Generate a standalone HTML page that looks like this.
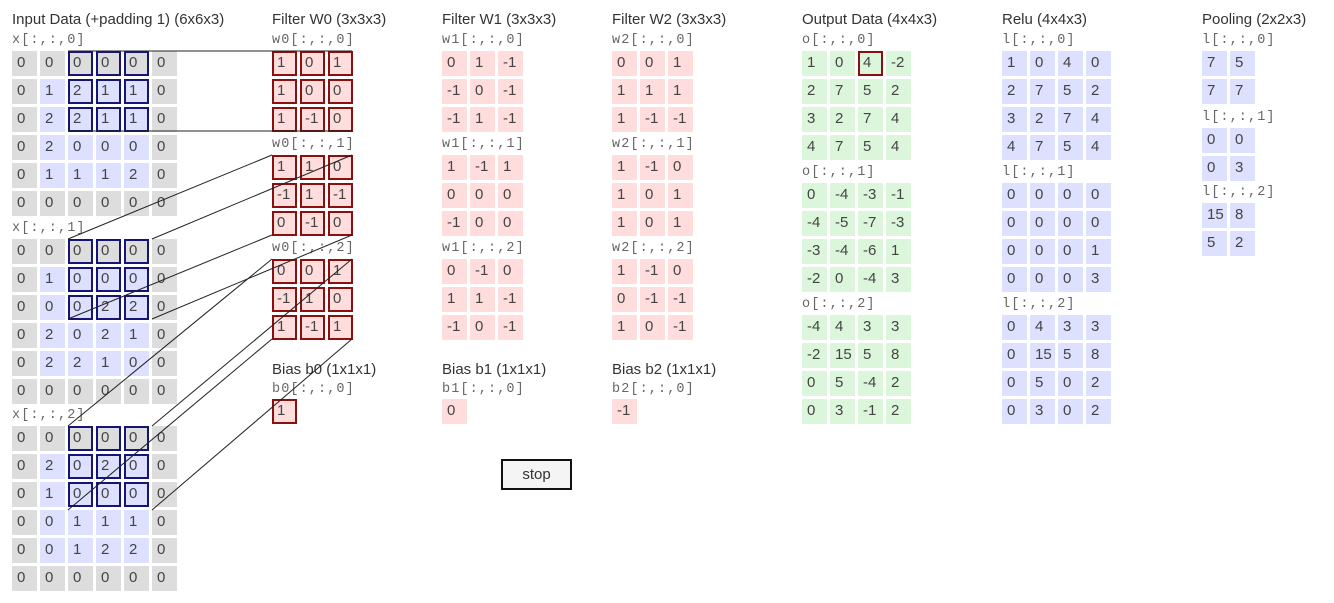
<!DOCTYPE html>
<html><head><meta charset="utf-8"><style>
body{margin:0;width:1334px;height:603px;background:#fff;position:relative;overflow:hidden;font-family:"Liberation Sans",sans-serif;}
.t{position:absolute;font-size:15px;color:#333;white-space:nowrap;}
.l{position:absolute;font-family:"Liberation Mono",monospace;font-size:13.5px;letter-spacing:1.1px;color:#666;white-space:nowrap;}
.g{position:absolute;}
.r{display:flex;gap:3px;margin-bottom:3px;height:25px;}
.c{width:25px;height:25px;box-sizing:border-box;padding-left:5px;font-size:15px;line-height:23px;color:#444;}
.p{background:#ddd}.v{background:#dde0ff}.k{background:#fdd}.n{background:#dcf6dc}
.hb{border:2px solid #14147a;padding-left:3px;line-height:19px}
.hr{border:2px solid #8a1010;padding-left:3px;line-height:19px}
button{position:absolute;left:501px;top:459px;width:71px;height:31px;background:#f4f4f4;border:2px solid #111;font-family:"Liberation Sans",sans-serif;font-size:15px;color:#333;padding:0;}
svg{position:absolute;left:0;top:0;}
</style></head><body>
<div class="t" style="left:12px;top:11px">Input Data (+padding 1) (6x6x3)</div>
<div class="t" style="left:272px;top:11px">Filter W0 (3x3x3)</div>
<div class="t" style="left:442px;top:11px">Filter W1 (3x3x3)</div>
<div class="t" style="left:612px;top:11px">Filter W2 (3x3x3)</div>
<div class="t" style="left:802px;top:11px">Output Data (4x4x3)</div>
<div class="t" style="left:1002px;top:11px">Relu (4x4x3)</div>
<div class="t" style="left:1202px;top:11px">Pooling (2x2x3)</div>

<div class="l" style="left:12px;top:33px">x[:,:,0]</div>
<div class="g" style="left:12px;top:51px">
<div class="r"><div class="c p">0</div><div class="c p">0</div><div class="c p hb">0</div><div class="c p hb">0</div><div class="c p hb">0</div><div class="c p">0</div></div>
<div class="r"><div class="c p">0</div><div class="c v">1</div><div class="c v hb">2</div><div class="c v hb">1</div><div class="c v hb">1</div><div class="c p">0</div></div>
<div class="r"><div class="c p">0</div><div class="c v">2</div><div class="c v hb">2</div><div class="c v hb">1</div><div class="c v hb">1</div><div class="c p">0</div></div>
<div class="r"><div class="c p">0</div><div class="c v">2</div><div class="c v">0</div><div class="c v">0</div><div class="c v">0</div><div class="c p">0</div></div>
<div class="r"><div class="c p">0</div><div class="c v">1</div><div class="c v">1</div><div class="c v">1</div><div class="c v">2</div><div class="c p">0</div></div>
<div class="r"><div class="c p">0</div><div class="c p">0</div><div class="c p">0</div><div class="c p">0</div><div class="c p">0</div><div class="c p">0</div></div>
</div>
<div class="l" style="left:12px;top:221px">x[:,:,1]</div>
<div class="g" style="left:12px;top:239px">
<div class="r"><div class="c p">0</div><div class="c p">0</div><div class="c p hb">0</div><div class="c p hb">0</div><div class="c p hb">0</div><div class="c p">0</div></div>
<div class="r"><div class="c p">0</div><div class="c v">1</div><div class="c v hb">0</div><div class="c v hb">0</div><div class="c v hb">0</div><div class="c p">0</div></div>
<div class="r"><div class="c p">0</div><div class="c v">0</div><div class="c v hb">0</div><div class="c v hb">2</div><div class="c v hb">2</div><div class="c p">0</div></div>
<div class="r"><div class="c p">0</div><div class="c v">2</div><div class="c v">0</div><div class="c v">2</div><div class="c v">1</div><div class="c p">0</div></div>
<div class="r"><div class="c p">0</div><div class="c v">2</div><div class="c v">2</div><div class="c v">1</div><div class="c v">0</div><div class="c p">0</div></div>
<div class="r"><div class="c p">0</div><div class="c p">0</div><div class="c p">0</div><div class="c p">0</div><div class="c p">0</div><div class="c p">0</div></div>
</div>
<div class="l" style="left:12px;top:408px">x[:,:,2]</div>
<div class="g" style="left:12px;top:426px">
<div class="r"><div class="c p">0</div><div class="c p">0</div><div class="c p hb">0</div><div class="c p hb">0</div><div class="c p hb">0</div><div class="c p">0</div></div>
<div class="r"><div class="c p">0</div><div class="c v">2</div><div class="c v hb">0</div><div class="c v hb">2</div><div class="c v hb">0</div><div class="c p">0</div></div>
<div class="r"><div class="c p">0</div><div class="c v">1</div><div class="c v hb">0</div><div class="c v hb">0</div><div class="c v hb">0</div><div class="c p">0</div></div>
<div class="r"><div class="c p">0</div><div class="c v">0</div><div class="c v">1</div><div class="c v">1</div><div class="c v">1</div><div class="c p">0</div></div>
<div class="r"><div class="c p">0</div><div class="c v">0</div><div class="c v">1</div><div class="c v">2</div><div class="c v">2</div><div class="c p">0</div></div>
<div class="r"><div class="c p">0</div><div class="c p">0</div><div class="c p">0</div><div class="c p">0</div><div class="c p">0</div><div class="c p">0</div></div>
</div>

<div class="l" style="left:272px;top:33px">w0[:,:,0]</div>
<div class="g" style="left:272px;top:51px">
<div class="r"><div class="c k hr">1</div><div class="c k hr">0</div><div class="c k hr">1</div></div>
<div class="r"><div class="c k hr">1</div><div class="c k hr">0</div><div class="c k hr">0</div></div>
<div class="r"><div class="c k hr">1</div><div class="c k hr">-1</div><div class="c k hr">0</div></div></div>
<div class="l" style="left:272px;top:137px">w0[:,:,1]</div>
<div class="g" style="left:272px;top:155px">
<div class="r"><div class="c k hr">1</div><div class="c k hr">1</div><div class="c k hr">0</div></div>
<div class="r"><div class="c k hr">-1</div><div class="c k hr">1</div><div class="c k hr">-1</div></div>
<div class="r"><div class="c k hr">0</div><div class="c k hr">-1</div><div class="c k hr">0</div></div></div>
<div class="l" style="left:272px;top:241px">w0[:,:,2]</div>
<div class="g" style="left:272px;top:259px">
<div class="r"><div class="c k hr">0</div><div class="c k hr">0</div><div class="c k hr">1</div></div>
<div class="r"><div class="c k hr">-1</div><div class="c k hr">1</div><div class="c k hr">0</div></div>
<div class="r"><div class="c k hr">1</div><div class="c k hr">-1</div><div class="c k hr">1</div></div></div>
<div class="t" style="left:272px;top:361px">Bias b0 (1x1x1)</div>
<div class="l" style="left:272px;top:382px">b0[:,:,0]</div>
<div class="g" style="left:272px;top:399px"><div class="r"><div class="c k hr">1</div></div></div>

<div class="l" style="left:442px;top:33px">w1[:,:,0]</div>
<div class="g" style="left:442px;top:51px">
<div class="r"><div class="c k">0</div><div class="c k">1</div><div class="c k">-1</div></div>
<div class="r"><div class="c k">-1</div><div class="c k">0</div><div class="c k">-1</div></div>
<div class="r"><div class="c k">-1</div><div class="c k">1</div><div class="c k">-1</div></div></div>
<div class="l" style="left:442px;top:137px">w1[:,:,1]</div>
<div class="g" style="left:442px;top:155px">
<div class="r"><div class="c k">1</div><div class="c k">-1</div><div class="c k">1</div></div>
<div class="r"><div class="c k">0</div><div class="c k">0</div><div class="c k">0</div></div>
<div class="r"><div class="c k">-1</div><div class="c k">0</div><div class="c k">0</div></div></div>
<div class="l" style="left:442px;top:241px">w1[:,:,2]</div>
<div class="g" style="left:442px;top:259px">
<div class="r"><div class="c k">0</div><div class="c k">-1</div><div class="c k">0</div></div>
<div class="r"><div class="c k">1</div><div class="c k">1</div><div class="c k">-1</div></div>
<div class="r"><div class="c k">-1</div><div class="c k">0</div><div class="c k">-1</div></div></div>
<div class="t" style="left:442px;top:361px">Bias b1 (1x1x1)</div>
<div class="l" style="left:442px;top:382px">b1[:,:,0]</div>
<div class="g" style="left:442px;top:399px"><div class="r"><div class="c k">0</div></div></div>

<div class="l" style="left:612px;top:33px">w2[:,:,0]</div>
<div class="g" style="left:612px;top:51px">
<div class="r"><div class="c k">0</div><div class="c k">0</div><div class="c k">1</div></div>
<div class="r"><div class="c k">1</div><div class="c k">1</div><div class="c k">1</div></div>
<div class="r"><div class="c k">1</div><div class="c k">-1</div><div class="c k">-1</div></div></div>
<div class="l" style="left:612px;top:137px">w2[:,:,1]</div>
<div class="g" style="left:612px;top:155px">
<div class="r"><div class="c k">1</div><div class="c k">-1</div><div class="c k">0</div></div>
<div class="r"><div class="c k">1</div><div class="c k">0</div><div class="c k">1</div></div>
<div class="r"><div class="c k">1</div><div class="c k">0</div><div class="c k">1</div></div></div>
<div class="l" style="left:612px;top:241px">w2[:,:,2]</div>
<div class="g" style="left:612px;top:259px">
<div class="r"><div class="c k">1</div><div class="c k">-1</div><div class="c k">0</div></div>
<div class="r"><div class="c k">0</div><div class="c k">-1</div><div class="c k">-1</div></div>
<div class="r"><div class="c k">1</div><div class="c k">0</div><div class="c k">-1</div></div></div>
<div class="t" style="left:612px;top:361px">Bias b2 (1x1x1)</div>
<div class="l" style="left:612px;top:382px">b2[:,:,0]</div>
<div class="g" style="left:612px;top:399px"><div class="r"><div class="c k">-1</div></div></div>

<div class="l" style="left:802px;top:33px">o[:,:,0]</div>
<div class="g" style="left:802px;top:51px">
<div class="r"><div class="c n">1</div><div class="c n">0</div><div class="c n hr">4</div><div class="c n">-2</div></div>
<div class="r"><div class="c n">2</div><div class="c n">7</div><div class="c n">5</div><div class="c n">2</div></div>
<div class="r"><div class="c n">3</div><div class="c n">2</div><div class="c n">7</div><div class="c n">4</div></div>
<div class="r"><div class="c n">4</div><div class="c n">7</div><div class="c n">5</div><div class="c n">4</div></div></div>
<div class="l" style="left:802px;top:165px">o[:,:,1]</div>
<div class="g" style="left:802px;top:183px">
<div class="r"><div class="c n">0</div><div class="c n">-4</div><div class="c n">-3</div><div class="c n">-1</div></div>
<div class="r"><div class="c n">-4</div><div class="c n">-5</div><div class="c n">-7</div><div class="c n">-3</div></div>
<div class="r"><div class="c n">-3</div><div class="c n">-4</div><div class="c n">-6</div><div class="c n">1</div></div>
<div class="r"><div class="c n">-2</div><div class="c n">0</div><div class="c n">-4</div><div class="c n">3</div></div></div>
<div class="l" style="left:802px;top:297px">o[:,:,2]</div>
<div class="g" style="left:802px;top:315px">
<div class="r"><div class="c n">-4</div><div class="c n">4</div><div class="c n">3</div><div class="c n">3</div></div>
<div class="r"><div class="c n">-2</div><div class="c n">15</div><div class="c n">5</div><div class="c n">8</div></div>
<div class="r"><div class="c n">0</div><div class="c n">5</div><div class="c n">-4</div><div class="c n">2</div></div>
<div class="r"><div class="c n">0</div><div class="c n">3</div><div class="c n">-1</div><div class="c n">2</div></div></div>

<div class="l" style="left:1002px;top:33px">l[:,:,0]</div>
<div class="g" style="left:1002px;top:51px">
<div class="r"><div class="c v">1</div><div class="c v">0</div><div class="c v">4</div><div class="c v">0</div></div>
<div class="r"><div class="c v">2</div><div class="c v">7</div><div class="c v">5</div><div class="c v">2</div></div>
<div class="r"><div class="c v">3</div><div class="c v">2</div><div class="c v">7</div><div class="c v">4</div></div>
<div class="r"><div class="c v">4</div><div class="c v">7</div><div class="c v">5</div><div class="c v">4</div></div></div>
<div class="l" style="left:1002px;top:165px">l[:,:,1]</div>
<div class="g" style="left:1002px;top:183px">
<div class="r"><div class="c v">0</div><div class="c v">0</div><div class="c v">0</div><div class="c v">0</div></div>
<div class="r"><div class="c v">0</div><div class="c v">0</div><div class="c v">0</div><div class="c v">0</div></div>
<div class="r"><div class="c v">0</div><div class="c v">0</div><div class="c v">0</div><div class="c v">1</div></div>
<div class="r"><div class="c v">0</div><div class="c v">0</div><div class="c v">0</div><div class="c v">3</div></div></div>
<div class="l" style="left:1002px;top:297px">l[:,:,2]</div>
<div class="g" style="left:1002px;top:315px">
<div class="r"><div class="c v">0</div><div class="c v">4</div><div class="c v">3</div><div class="c v">3</div></div>
<div class="r"><div class="c v">0</div><div class="c v">15</div><div class="c v">5</div><div class="c v">8</div></div>
<div class="r"><div class="c v">0</div><div class="c v">5</div><div class="c v">0</div><div class="c v">2</div></div>
<div class="r"><div class="c v">0</div><div class="c v">3</div><div class="c v">0</div><div class="c v">2</div></div></div>

<div class="l" style="left:1202px;top:33px">l[:,:,0]</div>
<div class="g" style="left:1202px;top:51px">
<div class="r"><div class="c v">7</div><div class="c v">5</div></div>
<div class="r"><div class="c v">7</div><div class="c v">7</div></div></div>
<div class="l" style="left:1202px;top:110px">l[:,:,1]</div>
<div class="g" style="left:1202px;top:128px">
<div class="r"><div class="c v">0</div><div class="c v">0</div></div>
<div class="r"><div class="c v">0</div><div class="c v">3</div></div></div>
<div class="l" style="left:1202px;top:185px">l[:,:,2]</div>
<div class="g" style="left:1202px;top:203px">
<div class="r"><div class="c v">15</div><div class="c v">8</div></div>
<div class="r"><div class="c v">5</div><div class="c v">2</div></div></div>

<button>stop</button>

<svg width="1334" height="603" viewBox="0 0 1334 603">
<g stroke="#222" stroke-width="1" fill="none">
<line x1="68" y1="51" x2="272" y2="51"/><line x1="152" y1="51" x2="352" y2="51"/>
<line x1="68" y1="131" x2="272" y2="131"/><line x1="152" y1="131" x2="352" y2="131"/>
<line x1="68" y1="239" x2="272" y2="155"/><line x1="152" y1="239" x2="352" y2="155"/>
<line x1="68" y1="319" x2="272" y2="235"/><line x1="152" y1="319" x2="352" y2="235"/>
<line x1="68" y1="426" x2="272" y2="259"/><line x1="152" y1="426" x2="352" y2="259"/>
<line x1="68" y1="510" x2="272" y2="339"/><line x1="152" y1="510" x2="352" y2="339"/>
</g></svg>
</body></html>
